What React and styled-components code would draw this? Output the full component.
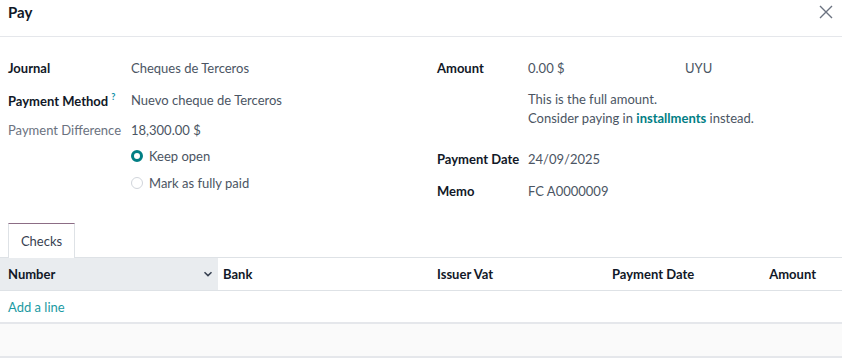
import React from "react";
import styled, { createGlobalStyle } from "styled-components";

const GlobalStyle = createGlobalStyle`
  html, body {
    margin: 0;
    padding: 0;
    background: #ffffff;
  }
  body {
    font-family: Lato, "Noto Sans", sans-serif;
    font-size: 13px;
    color: #374151;
  }
`;

const Dialog = styled.div`
  width: 842px;
  height: 363px;
  background: #fff;
  overflow: hidden;
`;

const Header = styled.div`
  height: 37px;
  display: flex;
  align-items: center;
  justify-content: space-between;
  padding: 0 8px 0 8px;
  border-bottom: 1px solid #e5e7eb;
  box-sizing: border-box;
`;

const Title = styled.div`
  font-size: 15px;
  font-weight: 700;
  color: #111827;
  margin-top: -12px;
`;

const Close = styled.button`
  border: 0;
  background: none;
  padding: 0;
  margin-top: -12px;
  width: 16px;
  height: 16px;
  display: flex;
`;

const Form = styled.div`
  display: grid;
  grid-template-columns: 429px 1fr;
  padding: 15px 0 0 8px;
  height: 186px;
  box-sizing: border-box;
`;

const Column = styled.div`
  display: flex;
  flex-direction: column;
`;

const Row = styled.div`
  display: flex;
  align-items: center;
  height: ${(p) => p.h || 32}px;
  margin-top: ${(p) => p.mt || 0}px;
`;

const Label = styled.div`
  width: ${(p) => p.w}px;
  flex-shrink: 0;
  font-weight: ${(p) => (p.muted ? 400 : 700)};
  color: ${(p) => (p.muted ? "#6b7280" : "#111827")};
`;

const Help = styled.sup`
  color: #0b8ea6;
  font-size: 9px;
  font-weight: 700;
  margin-left: 3px;
  vertical-align: 6px;
`;

const Value = styled.div`
  color: #4b5563;
  width: ${(p) => (p.w ? `${p.w}px` : "auto")};
`;

const Radio = styled.span`
  width: 12px;
  height: 12px;
  border-radius: 50%;
  box-sizing: border-box;
  margin-left: ${(p) => p.indent}px;
  margin-right: 6px;
  border: ${(p) => (p.checked ? "3.5px solid #017e84" : "1px solid #d1d5db")};
  background: #fff;
`;

const Note = styled.div`
  margin: 6px 0 0 91px;
  line-height: 19px;
  color: #4b5563;
`;

const Link = styled.a`
  color: #017e84;
  font-weight: 700;
  text-decoration: none;
`;

const TabBar = styled.div`
  height: 35px;
  display: flex;
  align-items: flex-end;
  padding-left: 8px;
  border-bottom: 1px solid #dee2e6;
  box-sizing: border-box;
`;

const Tab = styled.div`
  width: 67px;
  height: 35px;
  box-sizing: border-box;
  border: 1px solid #dee2e6;
  border-top: 1px solid #8c6d85;
  border-bottom: 0;
  background: #fff;
  margin-bottom: -1px;
  display: flex;
  align-items: center;
  justify-content: center;
  color: #374151;
`;

const Table = styled.div`
  display: grid;
  grid-template-columns: 218px 214px 175px 113px 1fr;
`;

const HeadCell = styled.div`
  height: 33px;
  display: flex;
  align-items: center;
  justify-content: ${(p) => (p.right ? "flex-end" : "space-between")};
  padding: 0 ${(p) => (p.right ? 4 : 5)}px 0 ${(p) => p.pl || 5}px;
  font-weight: 700;
  color: #111827;
  background: ${(p) => (p.sorted ? "#e9ecef" : "#fff")};
  border-bottom: 1px solid #dee2e6;
  box-sizing: border-box;
`;

const AddRow = styled.div`
  grid-column: 1 / -1;
  height: 33px;
  display: flex;
  align-items: center;
  padding-left: 8px;
  border-bottom: 2px solid #e5e7eb;
  box-sizing: border-box;
`;

const AddLink = styled.a`
  color: #1a9aa3;
  text-decoration: none;
`;

const EmptyRow = styled.div`
  grid-column: 1 / -1;
  height: 34px;
  background: #fafafa;
  border-bottom: 2px solid #e5e7eb;
  box-sizing: border-box;
`;

const Chevron = () => (
  <svg width="10" height="10" viewBox="0 0 10 10">
    <path d="M1.5 3.2 L5 6.6 L8.5 3.2" fill="none" stroke="#374151" strokeWidth="1.5" />
  </svg>
);

export default function App() {
  return (
    <Dialog>
      <GlobalStyle />
      <Header>
        <Title>Pay</Title>
        <Close aria-label="Close">
          <svg width="16" height="16" viewBox="0 0 16 16">
            <path d="M2 2 L14 14 M14 2 L2 14" stroke="#6b7280" strokeWidth="1.4" />
          </svg>
        </Close>
      </Header>

      <Form>
        <Column>
          <Row>
            <Label w={123}>Journal</Label>
            <Value>Cheques de Terceros</Value>
          </Row>
          <Row>
            <Label w={123}>
              Payment Method<Help>?</Help>
            </Label>
            <Value>Nuevo cheque de Terceros</Value>
          </Row>
          <Row h={28}>
            <Label w={123} muted>
              Payment Difference
            </Label>
            <Value>18,300.00 $</Value>
          </Row>
          <Row h={23}>
            <Radio indent={123} checked />
            <Value>Keep open</Value>
          </Row>
          <Row h={23} mt={4}>
            <Radio indent={123} />
            <Value>Mark as fully paid</Value>
          </Row>
        </Column>
        <Column>
          <Row>
            <Label w={91}>Amount</Label>
            <Value w={157}>0.00 $</Value>
            <Value>UYU</Value>
          </Row>
          <Note>
            This is the full amount.
            <br />
            Consider paying in <Link href="#">installments</Link> instead.
          </Note>
          <Row mt={15}>
            <Label w={91}>Payment Date</Label>
            <Value>24/09/2025</Value>
          </Row>
          <Row>
            <Label w={91}>Memo</Label>
            <Value>FC A0000009</Value>
          </Row>
        </Column>
      </Form>

      <TabBar>
        <Tab>Checks</Tab>
      </TabBar>

      <Table>
        <HeadCell sorted pl={8}>
          Number
          <Chevron />
        </HeadCell>
        <HeadCell>Bank</HeadCell>
        <HeadCell>Issuer Vat</HeadCell>
        <HeadCell>Payment Date</HeadCell>
        <HeadCell right>
          <span style={{ marginRight: 22 }}>Amount</span>
        </HeadCell>
        <AddRow>
          <AddLink href="#">Add a line</AddLink>
        </AddRow>
        <EmptyRow />
      </Table>
    </Dialog>
  );
}
